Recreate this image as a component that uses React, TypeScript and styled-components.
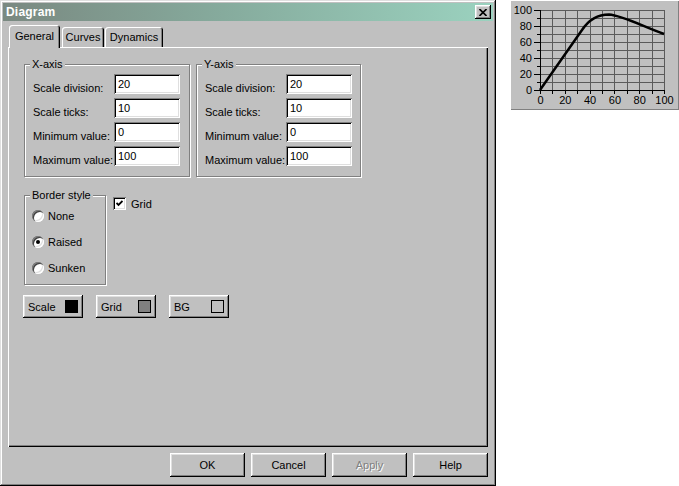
import React from 'react';
import styled, { createGlobalStyle } from 'styled-components';

const Global = createGlobalStyle`
  html, body { margin: 0; padding: 0; background: #ffffff; }
  body { font-family: "Liberation Sans", Arial, sans-serif; font-size: 11px; color: #000; }
  * { box-sizing: border-box; }
`;

const raised = `
  box-shadow: inset -1px -1px 0 #000, inset 1px 1px 0 #fff, inset -2px -2px 0 #808080, inset 2px 2px 0 #dfdfdf;
`;
const sunken = `
  box-shadow: inset 1px 1px 0 #808080, inset -1px -1px 0 #fff, inset 2px 2px 0 #000, inset -2px -2px 0 #dfdfdf;
`;

const Page = styled.div`
  display: flex;
  align-items: flex-start;
  width: 679px;
  height: 486px;
  overflow: hidden;
`;

const Window = styled.div`
  width: 496px;
  height: 486px;
  flex: none;
  background: #c0c0c0;
  padding: 3px;
  display: flex;
  flex-direction: column;
  box-shadow: inset -1px -1px 0 #000, inset 1px 1px 0 #dfdfdf, inset -2px -2px 0 #808080, inset 2px 2px 0 #fff;
`;

const TitleBar = styled.div`
  height: 18px;
  display: flex;
  align-items: center;
  justify-content: space-between;
  padding: 0 2px 0 3px;
  background: linear-gradient(90deg, #7a8981 0%, #86ab9d 45%, #9bd2bf 100%);
`;

const Title = styled.span`
  color: #fff;
  font-weight: bold;
  font-size: 12px;
  letter-spacing: 0.2px;
`;

const CloseButton = styled.div`
  width: 16px;
  height: 14px;
  background: #c0c0c0;
  display: flex;
  align-items: center;
  justify-content: center;
  ${raised}
`;

const Body = styled.div`
  flex: 1;
  display: flex;
  flex-direction: column;
  padding: 4px 5px 0 5px;
`;

const TabRow = styled.div`
  display: flex;
  align-items: flex-end;
  height: 22px;
  padding-left: 1px;
  position: relative;
  z-index: 1;
`;

const Tab = styled.div<{ $active?: boolean; $w: number; $ml?: number }>`
  width: ${p => p.$w}px;
  height: ${p => (p.$active ? 23 : 20)}px;
  margin-left: ${p => p.$ml ?? 0}px;
  margin-bottom: ${p => (p.$active ? -1 : 0)}px;
  background: #c0c0c0;
  border-radius: 3px 3px 0 0;
  display: flex;
  align-items: ${p => (p.$active ? 'flex-start' : 'center')};
  padding-top: ${p => (p.$active ? 5 : 0)}px;
  justify-content: center;
  font-size: 11px;
  box-shadow: inset 1px 1px 0 #fff, inset -1px 0 0 #000, inset -2px 0 0 #808080;
`;

const TabPanel = styled.div`
  height: 400px;
  padding: 17px 0 0 16px;
  display: flex;
  flex-direction: column;
  box-shadow: inset 1px 1px 0 #fff, inset -1px -1px 0 #000, inset -2px -2px 0 #808080;
`;

const Row = styled.div<{ $mt?: number; $gap?: number; $ml?: number }>`
  display: flex;
  align-items: flex-start;
  margin-top: ${p => p.$mt ?? 0}px;
  margin-left: ${p => p.$ml ?? 0}px;
  gap: ${p => p.$gap ?? 0}px;
`;

const Group = styled.div<{ $w: number; $h?: number; $pt: number; $pl: number; $pb: number }>`
  position: relative;
  width: ${p => p.$w}px;
  ${p => (p.$h ? `height: ${p.$h}px;` : '')}
  border: 1px solid #808080;
  box-shadow: inset 1px 1px 0 #fff, 1px 1px 0 #fff;
  padding: ${p => p.$pt}px 0 ${p => p.$pb}px ${p => p.$pl}px;
`;

const Legend = styled.span`
  position: absolute;
  top: -8px;
  left: 5px;
  padding: 0 2px;
  line-height: 14px;
  background: #c0c0c0;
`;

const FieldGrid = styled.div`
  display: grid;
  grid-template-columns: 81px 66px;
  grid-auto-rows: 20px;
  row-gap: 4px;
`;

const FieldLabel = styled.label`
  align-self: end;
  line-height: 12px;
  white-space: nowrap;
`;

const TextBox = styled.div`
  height: 20px;
  background: #fff;
  padding: 0 4px;
  display: flex;
  align-items: center;
  font-size: 11px;
  ${sunken}
`;

const RadioList = styled.div`
  display: flex;
  flex-direction: column;
  gap: 10px;
`;

const RadioRow = styled.div`
  display: flex;
  align-items: center;
  height: 16px;
  gap: 4px;
`;

const RadioCircle = styled.span<{ $on?: boolean }>`
  width: 12px;
  height: 12px;
  border-radius: 50%;
  background: #fff;
  display: flex;
  align-items: center;
  justify-content: center;
  box-shadow: inset 1px 1px 0 #808080, inset 2px 2px 0 #404040, inset -1px -1px 0 #fff, inset -2px -2px 0 #dfdfdf;
  &::after {
    content: '';
    width: 4px;
    height: 4px;
    border-radius: 50%;
    background: ${p => (p.$on ? '#000' : 'transparent')};
  }
`;

const CheckRow = styled.div`
  display: flex;
  align-items: center;
  gap: 5px;
  margin: 2px 0 0 7px;
`;

const CheckBox = styled.span`
  width: 13px;
  height: 13px;
  background: #fff;
  display: flex;
  align-items: center;
  justify-content: center;
  ${sunken}
`;

const ColorButton = styled.div`
  width: 60px;
  height: 23px;
  display: flex;
  align-items: center;
  justify-content: space-between;
  padding: 0 5px;
  background: #c0c0c0;
  ${raised}
`;

const Swatch = styled.span<{ $c: string }>`
  width: 13px;
  height: 13px;
  background: ${p => p.$c};
  border: 1px solid #000;
`;

const ButtonRow = styled.div`
  display: flex;
  justify-content: flex-end;
  gap: 6px;
  margin-top: 6px;
`;

const PushButton = styled.div<{ $disabled?: boolean }>`
  width: 75px;
  height: 24px;
  display: flex;
  align-items: center;
  justify-content: center;
  background: #c0c0c0;
  color: ${p => (p.$disabled ? '#808080' : '#000')};
  text-shadow: ${p => (p.$disabled ? '1px 1px 0 #fff' : 'none')};
  ${raised}
`;

const ChartPanel = styled.div`
  margin-left: 14px;
  width: 169px;
  height: 110px;
  flex: none;
  background: #c0c0c0;
  box-shadow: inset 1px 1px 0 #fff, inset -1px -1px 0 #808080;
`;

const PL = 30, PR = 154, PT = 10, PB = 90;
const xs = (v: number) => PL + (v / 100) * (PR - PL);
const ys = (v: number) => PB - (v / 100) * (PB - PT);

function Chart() {
  const ticks = Array.from({ length: 11 }, (_, i) => i * 10);
  return (
    <svg width="169" height="110" viewBox="0 0 169 110">
      {ticks.map(t => (
        <line key={'v' + t} x1={Math.round(xs(t)) + 0.5} x2={Math.round(xs(t)) + 0.5} y1={PT} y2={PB} stroke="#5a5a5a" strokeWidth="1" />
      ))}
      {ticks.map(t => (
        <line key={'h' + t} x1={PL} x2={PR + 1} y1={Math.round(ys(t)) + 0.5} y2={Math.round(ys(t)) + 0.5} stroke="#5a5a5a" strokeWidth="1" />
      ))}
      <line x1={PL + 0.5} x2={PL + 0.5} y1={PT} y2={PB + 1} stroke="#000" />
      <line x1={PL} x2={PR + 1} y1={PB + 0.5} y2={PB + 0.5} stroke="#000" />
      {ticks.map(t => (
        <line key={'yt' + t} x1={t % 20 === 0 ? PL - 6 : PL - 3} x2={PL} y1={Math.round(ys(t)) + 0.5} y2={Math.round(ys(t)) + 0.5} stroke="#000" />
      ))}
      {ticks.map(t => (
        <line key={'xt' + t} x1={Math.round(xs(t)) + 0.5} x2={Math.round(xs(t)) + 0.5} y1={PB} y2={PB + 4} stroke="#000" />
      ))}
      {[0, 20, 40, 60, 80, 100].map(t => (
        <text key={'yl' + t} x={PL - 8} y={ys(t) + 4} textAnchor="end" fontSize="11" fontFamily="Liberation Sans, Arial, sans-serif">{t}</text>
      ))}
      {[0, 20, 40, 60, 80, 100].map(t => (
        <text key={'xl' + t} x={xs(t) + 0.5} y={PB + 14} textAnchor="middle" fontSize="11" fontFamily="Liberation Sans, Arial, sans-serif">{t}</text>
      ))}
      <path d="M30,90 L72,30 C80,18 90,14.5 99,14.5 C112,15.5 130,25 154,34" fill="none" stroke="#000" strokeWidth="2.5" strokeLinejoin="round" />
    </svg>
  );
}

const xFields = [
  ['Scale division:', '20'],
  ['Scale ticks:', '10'],
  ['Minimum value:', '0'],
  ['Maximum value:', '100'],
];

function AxisGroup({ title, w }: { title: string; w: number }) {
  return (
    <Group $w={w} $pt={9} $pl={8} $pb={10}>
      <Legend>{title}</Legend>
      <FieldGrid>
        {xFields.map(([l, v]) => (
          <React.Fragment key={l}>
            <FieldLabel>{l}</FieldLabel>
            <TextBox>{v}</TextBox>
          </React.Fragment>
        ))}
      </FieldGrid>
    </Group>
  );
}

export default function App() {
  return (
    <>
      <Global />
      <Page>
        <Window>
          <TitleBar>
            <Title>Diagram</Title>
            <CloseButton>
              <svg width="8" height="7" viewBox="0 0 8 7">
                <path d="M0.5 0 L7.5 7 M7.5 0 L0.5 7" stroke="#000" strokeWidth="1.6" />
              </svg>
            </CloseButton>
          </TitleBar>
          <Body>
            <TabRow>
              <Tab $active $w={51}>General</Tab>
              <Tab $w={42} $ml={2}>Curves</Tab>
              <Tab $w={58} $ml={1}>Dynamics</Tab>
            </TabRow>
            <TabPanel>
              <Row $gap={6}>
                <AxisGroup title="X-axis" w={166} />
                <AxisGroup title="Y-axis" w={165} />
              </Row>
              <Row $mt={18}>
                <Group $w={82} $h={90} $pt={12} $pl={7} $pb={8}>
                  <Legend>Border style</Legend>
                  <RadioList>
                    <RadioRow><RadioCircle />None</RadioRow>
                    <RadioRow><RadioCircle $on />Raised</RadioRow>
                    <RadioRow><RadioCircle />Sunken</RadioRow>
                  </RadioList>
                </Group>
                <CheckRow>
                  <CheckBox>
                    <svg width="7" height="7" viewBox="0 0 7 7">
                      <path d="M0.5 3 L2.5 5 L6.5 1" fill="none" stroke="#000" strokeWidth="1.8" />
                    </svg>
                  </CheckBox>
                  Grid
                </CheckRow>
              </Row>
              <Row $mt={10} $ml={-1} $gap={13}>
                <ColorButton>Scale<Swatch $c="#000" /></ColorButton>
                <ColorButton>Grid<Swatch $c="#808080" /></ColorButton>
                <ColorButton>BG<Swatch $c="#c0c0c0" /></ColorButton>
              </Row>
            </TabPanel>
            <ButtonRow>
              <PushButton>OK</PushButton>
              <PushButton>Cancel</PushButton>
              <PushButton $disabled>Apply</PushButton>
              <PushButton>Help</PushButton>
            </ButtonRow>
          </Body>
        </Window>
        <ChartPanel>
          <Chart />
        </ChartPanel>
      </Page>
    </>
  );
}
